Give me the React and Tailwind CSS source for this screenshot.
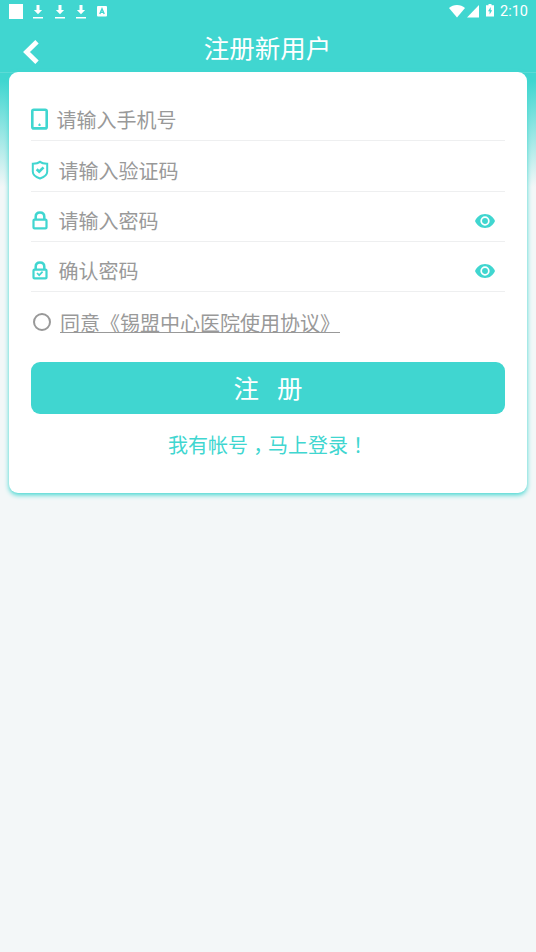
import { useState } from "react";

function DownloadIcon() {
  return (
    <svg className="w-[10px] h-[14px]" viewBox="0 0 10 14" fill="#fff">
      <path d="M3.5 0h3v5h2.6L5 9.2.9 5h2.6zM0 12h10v1.5H0z" />
    </svg>
  );
}

function StatusBar() {
  return (
    <div className="h-6 flex items-start justify-between pl-[9px] pr-2">
      <div className="flex pt-1">
        <div className="w-[14px] h-[15px] bg-white" />
        <div className="flex gap-[11.5px] pl-[10px] pt-[1px]">
          <DownloadIcon />
          <DownloadIcon />
          <DownloadIcon />
        </div>
        <svg className="w-[10px] h-[11px] ml-[11px] mt-[2px]" viewBox="0 0 10 11">
          <rect width="10" height="10.5" rx="1" fill="#fff" />
          <path d="M2.8 8 5 2.8 7.2 8M3.5 6.4h3" fill="none" stroke="#40d6d0" strokeWidth="1.4" />
        </svg>
      </div>
      <div className="flex">
        <svg className="w-4 h-[13px] mt-[5px]" viewBox="0 0 16 13" fill="#fff">
          <path d="M8 12.6 0 2.9C2.1 1 5 0 8 0s5.9 1 8 2.9z" />
        </svg>
        <svg className="w-3 h-[13px] mt-[5px] ml-[2px]" viewBox="0 0 12 13" fill="#fff">
          <path d="M12 0v12.5H0z" />
        </svg>
        <svg className="w-[8px] h-[13px] mt-1 ml-[7px]" viewBox="0 0 8 13">
          <path d="M2.5 0h3v1.2H8v11.3H0V1.2h2.5z" fill="#fff" />
          <path d="M4.7 3 2 7.2h1.6v3.3l2.6-4.3H4.7z" fill="#40d6d0" />
        </svg>
        <span className="ml-[6px] mt-[2px] text-[14.5px] leading-5 text-white font-[Roboto,sans-serif]">2:10</span>
      </div>
    </div>
  );
}

function PhoneIcon() {
  return (
    <svg className="w-[17px] h-[22px]" viewBox="0 0 17 22" fill="none" stroke="#40d6d0">
      <rect x="1.3" y="1.8" width="14.4" height="18.6" rx="1.5" strokeWidth="2.6" />
      <path d="M7 17h3M8.5 15.5V18" strokeWidth="1.1" />
    </svg>
  );
}

function ShieldIcon() {
  return (
    <svg className="w-[18px] h-[20px]" viewBox="0 0 17 20" fill="none" stroke="#40d6d0">
      <path d="M8.5 1.8C6.8 3.3 4.5 3.8 1.3 3.8v8c0 3 4 5.6 7.2 6.7 3.2-1.1 7.2-3.7 7.2-6.7v-8c-3.2 0-5.5-.5-7.2-2z" strokeWidth="2" />
      <path d="m5.2 9.2 2.5 2.4 4.3-4.2" strokeWidth="2.7" />
    </svg>
  );
}

function LockIcon({ checked }) {
  return (
    <svg className="ml-[1px] w-4 h-[19px]" viewBox="0 0 16 19" fill="none" stroke="#40d6d0">
      <rect x="1.5" y="8.6" width="13" height="8.8" rx="1" strokeWidth="2.2" />
      <path d="M3.7 8.5V5.8C3.7 3 5.6 1.5 8 1.5s4.3 1.5 4.3 4.3v2.7" strokeWidth="2.5" />
      {checked && <path d="m5 12 2.2 2.2 3.4-3.5" strokeWidth="1.7" />}
    </svg>
  );
}

function EyeIcon() {
  return (
    <svg className="w-5 h-[14px]" viewBox="0 0 20 14">
      <path d="M10 0C5.4 0 1.7 2.8 0 7c1.7 4.2 5.4 7 10 7s8.3-2.8 10-7c-1.7-4.2-5.4-7-10-7z" fill="#40d6d0" />
      <circle cx="10" cy="7" r="3.8" fill="none" stroke="#fff" strokeWidth="1.7" />
    </svg>
  );
}

function Field({ icon, label, gap, height, secret }) {
  return (
    <div className={`flex items-center border-b border-[#eeeff0] ${height}`}>
      <div className="w-[18px] pb-[2px] flex shrink-0">{icon}</div>
      <span className={`flex-1 ${gap}`}>{label}</span>
      {secret && (
        <button className="mr-[10px]" aria-label="显示密码">
          <EyeIcon />
        </button>
      )}
    </div>
  );
}

export default function App() {
  const [agree, setAgree] = useState(false);

  return (
    <div className="min-h-screen bg-[#f3f7f8] font-['Noto_Sans_CJK_SC',sans-serif]">
      <header className="h-[72px] bg-[#40d6d0]">
        <StatusBar />
        <div className="h-12 flex items-center">
          <button className="w-[60px] pl-[23px] pt-[8px]" aria-label="返回">
            <svg className="w-4 h-6" viewBox="0 0 16 24" fill="none" stroke="#fff" strokeWidth="4.8">
              <path d="M14 1.8 3.5 12 14 22.2" />
            </svg>
          </button>
          <h1 className="flex-1 pr-[61px] pb-[2px] text-center text-[25.5px] leading-[46px] text-white">注册新用户</h1>
        </div>
      </header>

      <main className="px-[9px] bg-[linear-gradient(to_bottom,#40d6d0_0px,#40d6d0_8px,#f3f7f8_114px)] border-t border-[#5cdbd6]">
        {/* 注册卡片 */}
        <div className="-mt-px h-[421px] rounded-[9px] bg-white px-[22px] pt-[19px] shadow-[0_2px_5px_#40d6d0] text-xl text-[#999999]">
          <Field icon={<PhoneIcon />} label="请输入手机号" gap="pl-[7.5px]" height="h-[50px] pt-[8px]" />
          <Field icon={<ShieldIcon />} label="请输入验证码" gap="pl-[9.5px]" height="h-[51px] pt-[9px]" />
          <Field icon={<LockIcon />} label="请输入密码" gap="pl-[9.5px]" height="h-[50px] pt-[9px]" secret />
          <Field icon={<LockIcon checked />} label="确认密码" gap="pl-[9.5px]" height="h-[50px] pt-[9px]" secret />

          <div className="h-[70px] flex items-start pt-4">
            <button
              className={`w-[18px] h-[18px] ml-[2px] mt-[5px] rounded-full border-2 border-[#999999] ${agree ? "bg-[#40d6d0]" : ""}`}
              onClick={() => setAgree(!agree)}
              aria-label="同意"
            />
            <a className="ml-[9px] leading-[30px] underline decoration-1 underline-offset-[1px]">同意《锡盟中心医院使用协议》</a>
          </div>

          <button className="w-full h-[52px] pb-[2px] flex items-center justify-center gap-[18px] rounded-[9px] bg-[#40d6d0] text-[25.5px] text-white">
            <span>注</span>
            <span>册</span>
          </button>
          <div className="mt-4 flex justify-center leading-[30px] text-[#40d6d0]">
            <span>我有帐号</span>
            <span className="pt-[6px] font-['Noto_Sans_CJK_TC',sans-serif]" lang="zh-TW">，</span>
            <span>马上登录</span>
            <span className="font-['Noto_Sans_CJK_TC',sans-serif]" lang="zh-TW">！</span>
          </div>
        </div>
      </main>
    </div>
  );
}
